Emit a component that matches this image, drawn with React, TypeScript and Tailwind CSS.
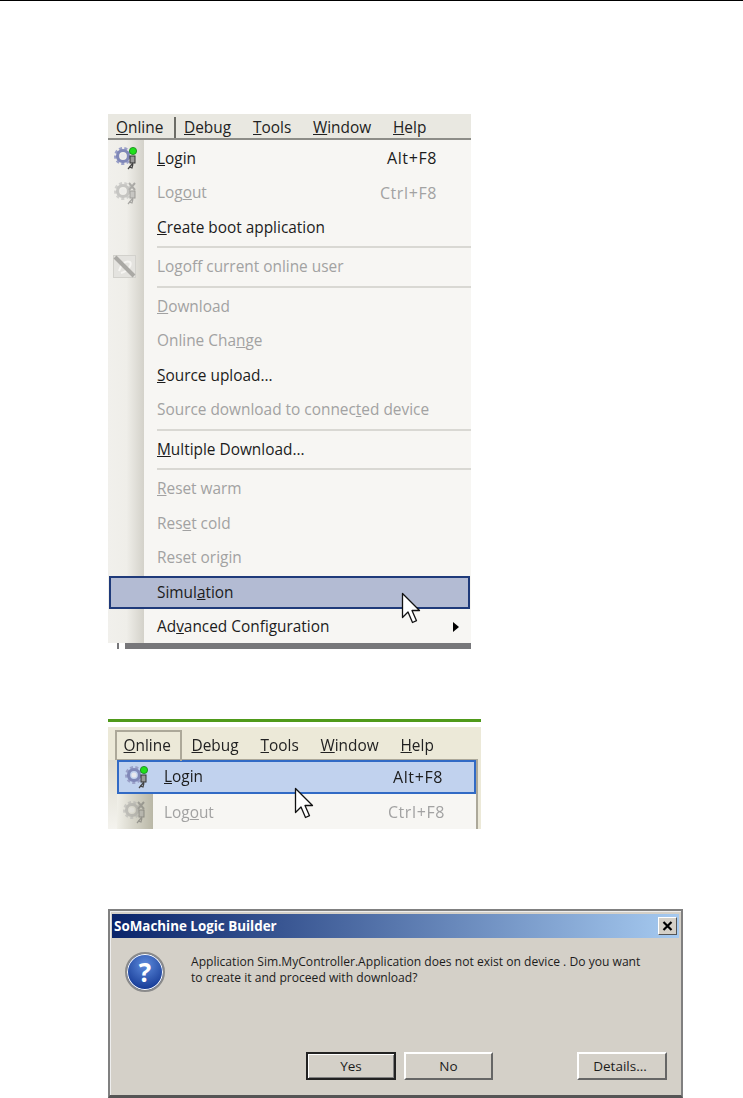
import type { ReactNode } from 'react';

const FONT = "font-['Open_Sans','Noto_Sans',sans-serif]";

function GearIcon({ dim = false }: { dim?: boolean }) {
  return (
    <svg width="26" height="26" viewBox="0 0 26 26" className={dim ? 'opacity-40 grayscale' : ''}>
      <circle cx="10" cy="11" r="7.5" fill="none" stroke="#9aa0c8" strokeWidth="3" strokeDasharray="3 2.2" />
      <circle cx="10" cy="11" r="5.5" fill="none" stroke="#8088b8" strokeWidth="3.2" />
      <circle cx="10" cy="11" r="2.6" fill="#e8e8ee" />
      {dim ? (
        <path d="M16 3l6 7M22 3l-6 7" stroke="#555" strokeWidth="2" />
      ) : (
        <circle cx="20" cy="6" r="3.6" fill="#1fe01a" stroke="#16821a" strokeWidth="0.8" />
      )}
      <rect x="17" y="11" width="5" height="7" fill="#9a9a9a" stroke="#333" strokeWidth="1" />
      <path d="M20 18l-5 6M20 19l-1 4-3-1" fill="none" stroke="#444" strokeWidth="1.2" />
    </svg>
  );
}

function LogoffIcon() {
  return (
    <svg width="23" height="23" viewBox="0 0 23 23">
      <rect x="0.5" y="0.5" width="22" height="22" fill="#e4e3df" stroke="#d2d1cc" />
      <path d="M6 16c2-7 7-11 11-9 2 2-1 9-9 11" fill="none" stroke="#f6f5f2" strokeWidth="2" />
      <path d="M2 2l19 19" stroke="#aaa9a5" strokeWidth="4" />
    </svg>
  );
}

function Cursor() {
  return (
    <svg width="20" height="33" viewBox="0 0 20 33">
      <path
        d="M1.5 1.5v24l5.5-5.5 4.5 10.5 4-1.8-4.5-10.2h7.5z"
        fill="#fff"
        stroke="#111"
        strokeWidth="1.3"
        strokeLinejoin="round"
      />
    </svg>
  );
}

function MenuBar({ open }: { open: string }) {
  const items = [
    { key: 'O', rest: 'nline', w: 'w-[68px]' },
    { key: 'D', rest: 'ebug', w: 'w-[69px]' },
    { key: 'T', rest: 'ools', w: 'w-[60px]' },
    { key: 'W', rest: 'indow', w: 'w-[80px]' },
    { key: 'H', rest: 'elp', w: 'w-[60px]' },
  ];
  return (
    <div className="flex h-full">
      {items.map((item) => (
        <div
          key={item.key}
          className={`${item.w} flex items-center pl-2 text-[15.4px] text-[#222] ${
            item.key === open ? 'border-r-2 border-[#6c6c66]' : ''
          }`}
        >
          <u>{item.key}</u>
          {item.rest}
        </div>
      ))}
    </div>
  );
}

function Row({
  label,
  shortcut,
  disabled = false,
  icon,
  active = false,
  arrow = false,
  gutter = 'w-[49px]',
  height = 'h-[34.5px]',
  shortcutGap = 'mr-[34px]',
}: {
  label: ReactNode;
  shortcut?: string;
  disabled?: boolean;
  icon?: ReactNode;
  active?: boolean;
  arrow?: boolean;
  gutter?: string;
  height?: string;
  shortcutGap?: string;
}) {
  return (
    <div className={`relative flex ${height} items-center text-[15.4px] ${disabled ? 'text-[#a2a2a2]' : 'text-[#1c1c1c]'}`}>
      {active && <div className="absolute inset-x-px inset-y-px border-2 border-[#1f3a7a] bg-[#b3bbd3]" />}
      <div className={`relative flex ${gutter} shrink-0 justify-start pl-[5px]`}>{icon}</div>
      <div className="relative flex-1">{label}</div>
      {shortcut && <div className={`relative ${shortcutGap} text-[16px] tracking-[0.6px]`}>{shortcut}</div>}
      {arrow && <div className="relative mr-[12px] h-0 w-0 border-y-[5px] border-l-[6px] border-y-transparent border-l-black" />}
    </div>
  );
}

function Sep() {
  return (
    <div className="flex h-[5px] items-center pl-[49px]">
      <div className="h-[2px] w-full bg-[#d9d8d3]" />
    </div>
  );
}

function MainMenu() {
  return (
    <div className="relative ml-[108px] h-[535px] w-[363px] bg-[#f7f6f3]">
      <div className="h-[26px] border-b-2 border-[#8d8d88] bg-[#e9e8e1] pt-[3px]">
        <MenuBar open="O" />
      </div>
      <div className="bg-[linear-gradient(to_right,#f1f0ec,#efeee9_50%,#d3d1c9_98%,#f7f6f3_98%)] bg-[length:37px_100%] bg-no-repeat pt-px">
        <Row label={<><u>L</u>ogin</>} shortcut="Alt+F8" icon={<GearIcon />} />
        <Row label={<>Log<u>o</u>ut</>} shortcut="Ctrl+F8" disabled icon={<GearIcon dim />} />
        <Row label={<><u>C</u>reate boot application</>} />
        <Sep />
        <Row label="Logoff current online user" disabled icon={<LogoffIcon />} />
        <Sep />
        <Row label={<><u>D</u>ownload</>} disabled />
        <Row label={<>Online Cha<u>n</u>ge</>} disabled />
        <Row label={<><u>S</u>ource upload...</>} />
        <Row label={<>Source download to connec<u>t</u>ed device</>} disabled />
        <Sep />
        <Row label={<><u>M</u>ultiple Download...</>} />
        <Sep />
        <Row label={<><u>R</u>eset warm</>} disabled />
        <Row label={<>Res<u>e</u>t cold</>} disabled />
        <Row label={<>Reset ori<u>g</u>in</>} disabled />
        <Row label={<>Simul<u>a</u>tion</>} active />
        <Row label={<>Ad<u>v</u>anced Configuration</>} arrow />
      </div>
      {/* page below the screenshot shows through at the bottom left */}
      <div className="absolute inset-x-0 bottom-0 flex h-[6px] bg-white">
        <div className="ml-[9px] h-full w-[2px] bg-[#77777a]" />
        <div className="ml-[6px] h-full flex-1 bg-[#77777a]" />
      </div>
      <div className="absolute left-[293px] top-[478px]">
        <Cursor />
      </div>
    </div>
  );
}

function SecondMenu() {
  return (
    <div className="relative ml-[108px] mt-[70px] h-[110px] w-[373px] overflow-hidden bg-[#ece9d8]">
      <div className="h-[3px] bg-[#4f9a1a]" />
      <div className="h-[5px] bg-white" />
      <div className="ml-[7.5px] h-[32px] pt-[5px]">
        <MenuBar open="" />
      </div>
      <div className="absolute left-[7px] top-[11px] h-[31px] w-[67px] border-x-2 border-t-2 border-[#aca899]" />
      <div className="absolute bottom-0 left-0 top-[41px] w-[9px] bg-[linear-gradient(to_bottom,#dedcd0,#f4f3ee)]" />
      <div className="ml-[9px] mr-[3px] border-r-2 border-t border-[#aca899] bg-[#f7f6f3]">
        <div className="border-2 border-[#316ac5] bg-[#c1d2ee]">
          <Row
            label={<><u>L</u>ogin</>}
            shortcut="Alt+F8"
            icon={<GearIcon />}
            gutter="w-[45px]"
            height="h-[30px]"
            shortcutGap="mr-[31px]"
          />
        </div>
        <div className="bg-[linear-gradient(to_right,#f0efe8,#b9b7a6)] bg-[length:36px_100%] bg-no-repeat pt-px">
          <Row
            label={<>Log<u>o</u>ut</>}
            shortcut="Ctrl+F8"
            disabled
            icon={<GearIcon dim />}
            gutter="w-[47px]"
            shortcutGap="mr-[31px]"
          />
        </div>
      </div>
      <div className="absolute left-[186px] top-[68px]">
        <Cursor />
      </div>
    </div>
  );
}

function BevelButton({ label, isDefault = false, className }: { label: string; isDefault?: boolean; className: string }) {
  return (
    <button
      className={`${className} flex h-[28px] items-center justify-center bg-[#d4d0c8] text-[13.5px] text-[#1c1c1c] ${
        isDefault
          ? 'border-2 border-[#222] shadow-[inset_1px_1px_0_#fff,inset_-1px_-1px_0_#808080]'
          : 'border-2 border-b-[#666] border-l-white border-r-[#666] border-t-white'
      }`}
    >
      {label}
    </button>
  );
}

function QuestionIcon() {
  return (
    <div className="flex h-[40px] w-[40px] items-center justify-center rounded-full border-2 border-[#8b8b8b] bg-[radial-gradient(circle_at_50%_30%,#5d8bdc,#1a3f9a_75%)] shadow-[inset_0_0_0_1px_#fff] text-[26px] font-bold leading-none text-white">
      ?
    </div>
  );
}

function Dialog() {
  return (
    <div className="ml-[108px] mt-[80px] flex h-[189px] w-[575px] flex-col border-2 border-b-[3px] border-[#808080] border-b-[#555] bg-[#d4d0c8] px-[2px] pt-[3px] shadow-[inset_1px_1px_0_#eee]">
      <div className="flex h-[24px] shrink-0 items-center justify-between bg-[linear-gradient(to_right,#0a246a,#a6caf0)] pl-[2px] pr-[2px]">
        <span className="text-[13.4px] font-bold text-white">SoMachine Logic Builder</span>
        <div className="flex h-[18px] w-[19px] items-center justify-center border border-b-[#555] border-l-white border-r-[#555] border-t-white bg-[#d4d0c8]">
          <svg width="11" height="10" viewBox="0 0 11 10">
            <path d="M1.5 1l8 8M9.5 1l-8 8" stroke="#000" strokeWidth="2.2" />
          </svg>
        </div>
      </div>
      <div className="flex flex-1 flex-col">
        <div className="flex pl-[13px] pt-[14px]">
          <QuestionIcon />
          <p className="ml-[26px] w-[458px] pt-[2px] text-[12.1px] leading-[16px] text-[#1c1c1c]">
            Application Sim.MyController.Application does not exist on device . Do you want to create it and proceed with download?
          </p>
        </div>
        <div className="mt-[60px] flex">
          <BevelButton label="Yes" isDefault className="ml-[194px] w-[90px]" />
          <BevelButton label="No" className="ml-[8px] w-[89px]" />
          <BevelButton label="Details..." className="ml-[84px] w-[90px] pr-[4px]" />
        </div>
      </div>
    </div>
  );
}

export default function App() {
  return (
    <div className={`${FONT} h-[1098px] w-[743px] overflow-hidden bg-white`}>
      <div className="h-px bg-black" />
      <div className="h-[113px]" />
      <div className="blur-[0.35px]">
        <MainMenu />
        <SecondMenu />
        <Dialog />
      </div>
    </div>
  );
}
